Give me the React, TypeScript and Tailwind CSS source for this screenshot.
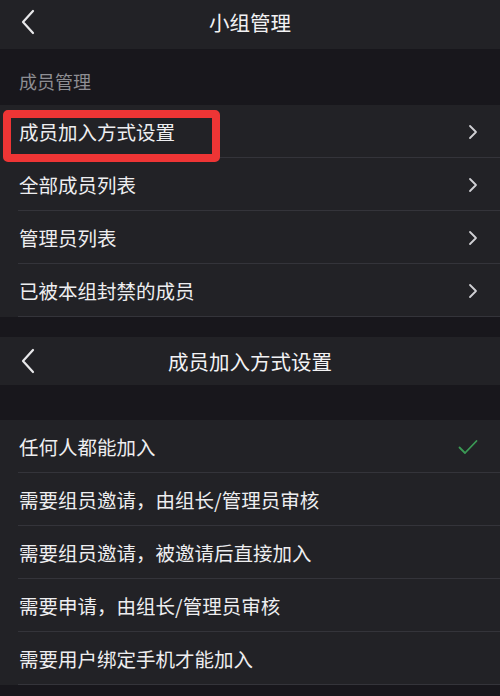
import React from 'react';

const font = { fontFamily: '"Noto Sans CJK SC", "Noto Sans", sans-serif' };

const BackIcon = () => (
  <svg width="16" height="26" viewBox="0 0 16 26" fill="none">
    <path d="M13 2 L3 13 L13 24" stroke="#e8e8ea" strokeWidth="2.2" strokeLinecap="round" strokeLinejoin="round" />
  </svg>
);

const Chevron = () => (
  <svg width="10" height="16" viewBox="0 0 10 16" fill="none">
    <path d="M2 2 L8 8 L2 14" stroke="#d0d0d4" strokeWidth="1.8" strokeLinecap="round" strokeLinejoin="round" />
  </svg>
);

const Check = () => (
  <svg width="20" height="16" viewBox="0 0 20 16" fill="none">
    <path d="M1.5 8.5 L7 14 L18.5 2" stroke="#3b9a55" strokeWidth="1.8" strokeLinecap="round" strokeLinejoin="round" />
  </svg>
);

function NavBar({ title, top }: { title: string; top?: boolean }) {
  return (
    <div className={`relative flex items-center justify-center bg-[#222226] ${top ? 'h-[49px] pb-[4px]' : 'h-[48px]'}`}>
      <div className={`absolute left-[20px] ${top ? 'top-[9px]' : 'top-[11px]'}`}>
        <BackIcon />
      </div>
      <span className="text-[20.5px] text-[#f2f2f4]">{title}</span>
    </div>
  );
}

function Row({ label, right, highlight }: { label: string; right?: React.ReactNode; highlight?: boolean }) {
  return (
    <div className="relative flex h-[53px] items-center justify-between pl-[19px] pr-[22px]">
      <span className="text-[19.5px] text-[#eeeef0]">{label}</span>
      {right}
      <div className="absolute bottom-0 left-[18px] right-0 h-px bg-[#34343a]" />
      {highlight && (
        <div className="absolute left-[3px] top-[5px] h-[52px] w-[217px] rounded-[5px] border-[8px] border-[#ee3535]" />
      )}
    </div>
  );
}

export default function App() {
  const menu = ['成员加入方式设置', '全部成员列表', '管理员列表', '已被本组封禁的成员'];
  const options = [
    '任何人都能加入',
    '需要组员邀请，由组长/管理员审核',
    '需要组员邀请，被邀请后直接加入',
    '需要申请，由组长/管理员审核',
    '需要用户绑定手机才能加入',
  ];
  return (
    <div className="flex h-[696px] w-[500px] flex-col overflow-hidden bg-[#18171c]" style={font}>
      <NavBar title="小组管理" top />
      <div className="flex h-[56px] items-center pl-[19px] pt-[8px]">
        <span className="text-[18px] text-[#8e8e93]">成员管理</span>
      </div>
      <div className="bg-[#222226]">
        {menu.map((m, i) => (
          <Row key={m} label={m} right={<Chevron />} highlight={i === 0} />
        ))}
      </div>
      <div className="h-[20px]" />
      <NavBar title="成员加入方式设置" />
      <div className="h-[35px]" />
      <div className="bg-[#222226]">
        {options.map((o, i) => (
          <Row key={o} label={o} right={i === 0 ? <Check /> : undefined} />
        ))}
      </div>
    </div>
  );
}
